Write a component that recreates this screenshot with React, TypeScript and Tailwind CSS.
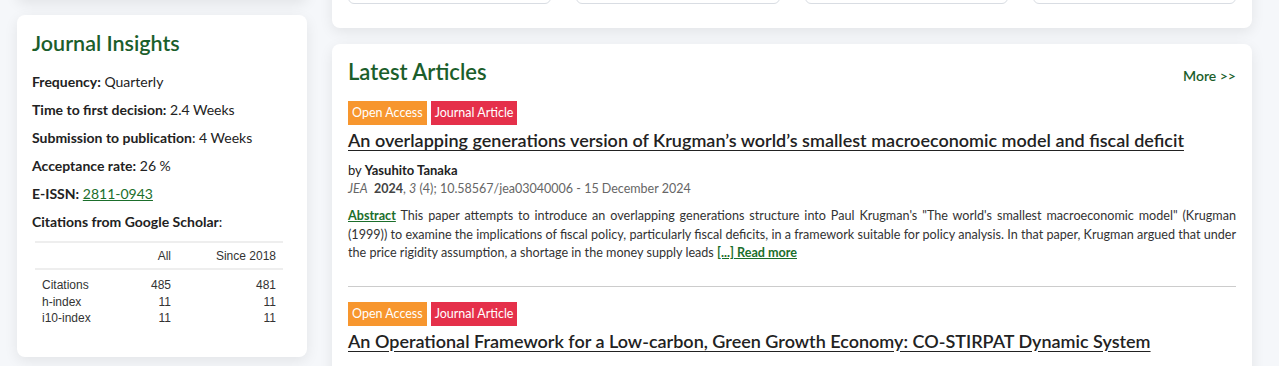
import React from "react";

const font = { fontFamily: "Lato, 'Noto Sans', sans-serif" };

function Badges() {
  return (
    <div className="flex gap-1 text-[12.5px] leading-[24px] text-white">
      <span className="bg-[#f7962e] px-[4px]">Open Access</span>
      <span className="bg-[#e5304a] px-[4px]">Journal Article</span>
    </div>
  );
}

export default function App() {
  return (
    <div className="min-h-[366px] w-full overflow-hidden bg-[#f5f7fa] text-[#222]" style={font}>
      <div className="flex gap-[25px] pl-[17px]">
        {/* Left column */}
        <div className="flex w-[290px] shrink-0 flex-col gap-[15px]">
          <div className="-mt-[60px] h-[60px] rounded-lg bg-white shadow-[0_4px_14px_rgba(0,0,0,0.08)]" />
          <div className="rounded-lg bg-white px-[15px] pb-[30px] pt-[15px] shadow-[0_4px_14px_rgba(0,0,0,0.08)]">
            <h3 className="text-[21.5px] font-semibold leading-[26px] text-[#1b5e2b]">Journal Insights</h3>
            <div className="mt-[16px] flex flex-col gap-[9px] text-[14px] leading-[19px] text-[#222]">
              <p><b>Frequency:</b> Quarterly</p>
              <p><b>Time to first decision:</b> 2.4 Weeks</p>
              <p><b>Submission to publication</b>: 4 Weeks</p>
              <p><b>Acceptance rate:</b> 26 %</p>
              <p>
                <b>E-ISSN:</b>{" "}
                <span className="text-[#1b6e2b] underline">2811-0943</span>
              </p>
              <p><b>Citations from Google Scholar</b>:</p>
            </div>
            <table
              className="ml-[3px] mt-[10px] w-[248px] table-fixed text-[12px] text-[#333]"
              style={{ fontFamily: "'Liberation Sans', Arial, sans-serif" }}
            >
              <thead>
                <tr className="border-y-2 border-[#eeeeee]">
                  <th className="h-[27px] w-[90px]"></th>
                  <th className="w-[50px] pr-[4px] text-right font-normal">All</th>
                  <th className="pr-[7px] text-right font-normal">Since 2018</th>
                </tr>
              </thead>
              <tbody className="leading-[16.5px]">
                <tr>
                  <td className="pl-[7px] pt-[7px]">Citations</td>
                  <td className="pr-[4px] pt-[7px] text-right">485</td>
                  <td className="pr-[7px] pt-[7px] text-right">481</td>
                </tr>
                <tr>
                  <td className="pl-[7px]">h-index</td>
                  <td className="pr-[4px] text-right">11</td>
                  <td className="pr-[7px] text-right">11</td>
                </tr>
                <tr>
                  <td className="pl-[7px]">i10-index</td>
                  <td className="pr-[4px] text-right">11</td>
                  <td className="pr-[7px] text-right">11</td>
                </tr>
              </tbody>
            </table>
          </div>
        </div>

        {/* Right column */}
        <div className="flex w-[920px] shrink-0 flex-col gap-[16px]">
          <div className="-mt-[40px] rounded-lg bg-white px-[16px] pb-[24px] shadow-[0_4px_14px_rgba(0,0,0,0.08)]">
            <div className="grid grid-cols-4 gap-[25px]">
              {[0, 1, 2, 3].map((i) => (
                <div key={i} className="h-[44px] rounded-md border border-[#d9dde3]" />
              ))}
            </div>
          </div>
          <div className="rounded-lg bg-white px-[16px] pb-[30px] pt-[14px] shadow-[0_4px_14px_rgba(0,0,0,0.08)]">
            <div className="flex items-end justify-between">
              <h2 className="text-[22px] font-semibold leading-[28px] text-[#1b5e2b]">Latest Articles</h2>
              <a className="text-[14px] font-semibold text-[#1b5e2b]">More &gt;&gt;</a>
            </div>

            <div className="mt-[15px]">
              <Badges />
              <h3 className="mt-[3px] text-[18px] font-semibold leading-[24px] text-[#222] underline underline-offset-[3px]">
                An overlapping generations version of Krugman’s world’s smallest macroeconomic model and fiscal deficit
              </h3>
              <p className="mt-[9px] text-[13px] leading-[18px] text-[#222]">
                by <b>Yasuhito Tanaka</b>
              </p>
              <p className="text-[12.5px] leading-[20px] text-[#666]">
                <i>JEA</i>&nbsp; <b className="text-[#444]">2024</b>, <i>3</i> (4); 10.58567/jea03040006 - 15 December 2024
              </p>
              <p className="mt-[8px] text-justify text-[12.6px] leading-[18.5px] text-[#333]">
                <a className="font-bold text-[#1b6e2b] underline">Abstract</a> This paper attempts to introduce an overlapping generations structure into Paul Krugman's "The world's smallest macroeconomic model" (Krugman (1999)) to examine the implications of fiscal policy, particularly fiscal deficits, in a framework suitable for policy analysis. In that paper, Krugman argued that under the price rigidity assumption, a shortage in the money supply leads{" "}
                <a className="font-bold text-[#1b6e2b] underline">[...] Read more</a>
              </p>
            </div>

            <hr className="mt-[23px] border-t border-[#cccccc]" />

            <div className="mt-[15px]">
              <Badges />
              <h3 className="mt-[3px] text-[18px] font-semibold leading-[24px] text-[#222] underline underline-offset-[3px]">
                An Operational Framework for a Low-carbon, Green Growth Economy: CO-STIRPAT Dynamic System
              </h3>
            </div>
          </div>
        </div>
      </div>
    </div>
  );
}
